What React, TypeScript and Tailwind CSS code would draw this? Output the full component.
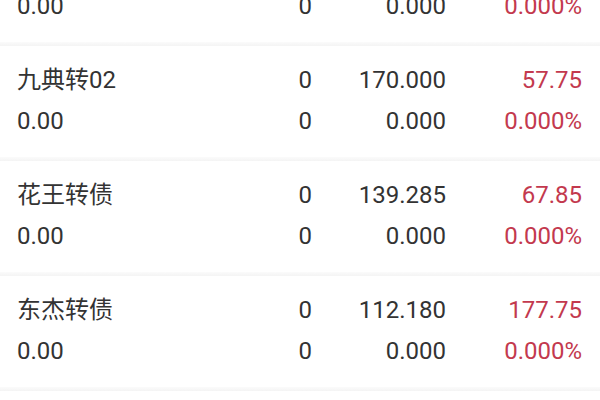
type Bond = {
  name: string
  price: string
  volume: string
  cost: string
  premium: string
  value: string
  rate: string
}

const bonds: Bond[] = [
  { name: "", price: "0.00", volume: "0", cost: "", premium: "", value: "0.000", rate: "0.000%" },
  { name: "九典转02", price: "0.00", volume: "0", cost: "170.000", premium: "57.75", value: "0.000", rate: "0.000%" },
  { name: "花王转债", price: "0.00", volume: "0", cost: "139.285", premium: "67.85", value: "0.000", rate: "0.000%" },
  { name: "东杰转债", price: "0.00", volume: "0", cost: "112.180", premium: "177.75", value: "0.000", rate: "0.000%" },
  { name: "", price: "", volume: "", cost: "", premium: "", value: "", rate: "" },
]

function BondRow({ bond }: { bond: Bond }) {
  return (
    <div>
      <div className="grid h-[111px] grid-cols-[1fr_100px_134px_136px] grid-rows-[41px_41px] content-start pl-[17px] pr-[18px] pt-[14px] text-[24px] leading-[41px] text-[#333333]">
        <span className="whitespace-nowrap">{bond.name}</span>
        <span className="text-right">{bond.name ? bond.volume : ""}</span>
        <span className="text-right">{bond.cost}</span>
        <span className="text-right text-[#c3394e]">{bond.premium}</span>
        <span>{bond.price}</span>
        <span className="text-right">{bond.volume}</span>
        <span className="text-right">{bond.value}</span>
        <span className="text-right text-[#c3394e]">{bond.rate}</span>
      </div>
      <div className="h-[4px] bg-gradient-to-b from-[#fbfbfb] to-[#f4f4f4]" />
    </div>
  )
}

export default function App() {
  return (
    <div
      className="h-[400px] w-[600px] overflow-hidden bg-white"
      style={{ fontFamily: 'Roboto, "Noto Sans CJK SC", sans-serif' }}
    >
      <div className="-mt-[69px]">
        {bonds.map((bond, i) => (
          <BondRow key={i} bond={bond} />
        ))}
      </div>
    </div>
  )
}
